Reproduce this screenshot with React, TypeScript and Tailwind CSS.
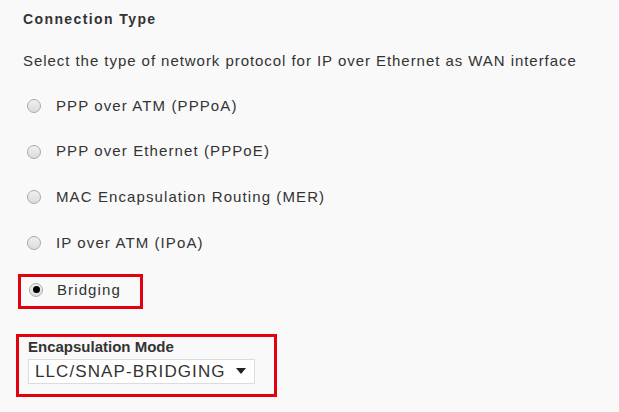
import React from "react";

const options = [
  "PPP over ATM (PPPoA)",
  "PPP over Ethernet (PPPoE)",
  "MAC Encapsulation Routing (MER)",
  "IP over ATM (IPoA)",
];

const Radio = ({ checked }: { checked?: boolean }) => (
  <span className="w-[14px] h-[14px] rounded-full border border-[#a9a9a9] bg-gradient-to-b from-[#f0f0f0] to-[#dcdcdc] flex items-center justify-center shrink-0">
    {checked && <span className="w-[7px] h-[7px] rounded-full bg-black" />}
  </span>
);

export default function App() {
  return (
    <div className="w-[619px] h-[412px] bg-[#f9f9f9] text-[#333] font-['Liberation_Sans',Arial,sans-serif] overflow-hidden">
      <div className="pl-[23px] pt-[10px]">
        <div className="text-[14px] font-bold leading-[18px] tracking-[1.4px]">Connection Type</div>
        <div className="mt-[24px] text-[15px] leading-[18px] tracking-[0.95px]">
          Select the type of network protocol for IP over Ethernet as WAN interface
        </div>
      </div>

      <div className="mt-[13px] flex flex-col">
        {options.map((o) => (
          <div key={o} className="h-[45.7px] pl-[27px] flex items-center gap-[15px] text-[15px] tracking-[1.1px]">
            <Radio />
            <span>{o}</span>
          </div>
        ))}
        <div className="mt-[8px] ml-[18px] w-[125px] h-[35px] border-[3px] border-[#e3000f] flex items-center gap-[14px] pl-[8px] pb-[3px] text-[15px] tracking-[1.1px]">
          <Radio checked />
          <span>Bridging</span>
        </div>
      </div>

      <div className="ml-[16px] mt-[25px] w-[261px] h-[63px] border-[3px] border-[#e3000f] pl-[9px] pt-[1px]">
        <div className="text-[15px] font-bold leading-[18px]">Encapsulation Mode</div>
        <div className="mt-[3px] w-[227px] h-[25px] bg-white border border-[#dcdcdc] flex items-center justify-between pl-[6px] pr-[8px] text-[17px] tracking-[1.1px]">
          <span>LLC/SNAP-BRIDGING</span>
          <svg width="10" height="6" viewBox="0 0 10 6">
            <path d="M0 0 L10 0 L5 6 Z" fill="#222" />
          </svg>
        </div>
      </div>
    </div>
  );
}
